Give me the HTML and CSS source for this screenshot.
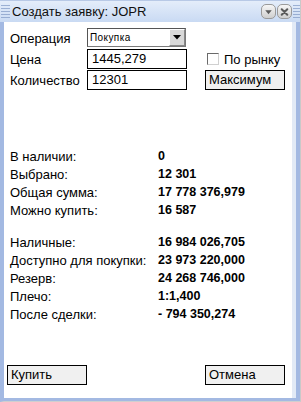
FILE: index.html
```html
<!DOCTYPE html>
<html lang="ru">
<head>
    <meta charset="UTF-8">
    <meta name="viewport" content="width=device-width, initial-scale=1.0">
    <title>Создать заявку</title>
    <link rel="stylesheet" href="styles.css">
</head>
<body>
    <div class="window">
        <div class="titlebar">
            <span class="grip left-grip"></span>
            <span class="title">Создать заявку: JOPR</span>
            <span class="tb-btn">
                <svg width="14" height="14" viewBox="0 0 14 14"><path d="M3.5 5 L10.5 5 L7 9.5 Z" fill="#5a5a5a"/></svg>
            </span>
            <span class="tb-btn">
                <svg width="14" height="14" viewBox="0 0 14 14"><path d="M4 4 L10 10 M10 4 L4 10" stroke="#5a5a5a" stroke-width="2.2" stroke-linecap="round"/></svg>
            </span>
            <span class="grip right-grip"></span>
        </div>
        <div class="content">
            <div class="form">
                <label>Операция</label>
                <div class="select">
                    <span class="select-text">Покупка</span>
                    <span class="select-arrow">
                        <svg width="8" height="5" viewBox="0 0 8 5"><path d="M0 0 H8 L4 4.5 Z" fill="#000"/></svg>
                    </span>
                </div>
                <span></span>

                <label>Цена</label>
                <div class="field">1445,279</div>
                <div class="check"><span class="box"></span>По рынку</div>

                <label>Количество</label>
                <div class="field">12301</div>
                <div class="btn">Максимум</div>
            </div>

            <div class="info first">
                <span>В наличии:</span><b>0</b>
                <span>Выбрано:</span><b>12 301</b>
                <span>Общая сумма:</span><b>17 778 376,979</b>
                <span>Можно купить:</span><b>16 587</b>
            </div>

            <div class="info second">
                <span>Наличные:</span><b>16 984 026,705</b>
                <span>Доступно для покупки:</span><b>23 973 220,000</b>
                <span>Резерв:</span><b>24 268 746,000</b>
                <span>Плечо:</span><b>1:1,400</b>
                <span>После сделки:</span><b>- 794 350,274</b>
            </div>

            <div class="actions">
                <div class="btn">Купить</div>
                <div class="btn">Отмена</div>
            </div>
        </div>
    </div>
</body>
</html>
```

FILE: styles.css
```css
*{
    box-sizing: border-box;
}
body{
    margin: 0;
    font-family: "Liberation Sans", Arial, sans-serif;
    font-size: 12px;
    color: #000;
    background: #d8d8d8;
}
.window{
    width: 301px;
    height: 402px;
    display: flex;
    flex-direction: column;
    background: #a3b9e2;
    border-left: 4px solid #a3b9e2;
    border-right: 1px solid #c9c9c9;
    border-bottom: 1px solid #cfcfcf;
    padding-right: 4px;
    padding-bottom: 3px;
}
.titlebar{
    height: 22px;
    margin-left: -4px;
    margin-right: -4px;
    display: flex;
    align-items: center;
    background: linear-gradient(#e4edfa, #c9daf3);
    border-top: 1px solid #b8c9e6;
}
.grip{
    height: 14px;
    background: repeating-linear-gradient(#7f98c4 0 1px, transparent 1px 3px);
    opacity: 0.7;
}
.left-grip{
    width: 9px;
    margin-left: 1px;
}
.right-grip{
    width: 7px;
    margin-left: 1px;
}
.title{
    flex: 1;
    padding-left: 2px;
    font-size: 13px;
    color: #111;
}
.tb-btn{
    width: 15px;
    height: 15px;
    margin-left: 1px;
    border-radius: 5px;
    border: 1px solid #9a9a9a;
    background: linear-gradient(#f6f6f6, #cfcfcf);
    display: flex;
    align-items: center;
    justify-content: center;
}
.content{
    flex: 1;
    background: #fff;
    border-right: 4px solid #e2eaf6;
    display: flex;
    flex-direction: column;
    padding: 6px 0 13px 6px;
}
.form{
    display: grid;
    grid-template-columns: 77px 100px 80px;
    grid-auto-rows: 20px;
    row-gap: 1px;
    align-items: center;
}
.form label{
    font-size: 13px;
}
.select{
    height: 19px;
    width: 99px;
    display: flex;
    border: 1px solid #7a7a7a;
    border-top-color: #555;
    border-left-color: #555;
    align-self: start;
}
.select-text{
    flex: 1;
    font-size: 10px;
    letter-spacing: 0.4px;
    line-height: 17px;
    padding-left: 2px;
}
.select-arrow{
    width: 16px;
    background: #d8d8d8;
    border-left: 1px solid #fff;
    border-top: 1px solid #fff;
    border-right: 1px solid #888;
    border-bottom: 1px solid #888;
    display: flex;
    align-items: center;
    justify-content: center;
}
.field{
    height: 20px;
    width: 100px;
    border: 1px solid #000;
    font-size: 13px;
    line-height: 18px;
    padding-left: 4px;
}
.check{
    margin-left: 20px;
    font-size: 13px;
    display: flex;
    align-items: center;
    white-space: nowrap;
}
.box{
    flex-shrink: 0;
    width: 12px;
    height: 12px;
    margin-right: 5px;
    border: 1px solid #6a6a6a;
    border-right-color: #d0d0d0;
    border-bottom-color: #d0d0d0;
}
.btn{
    width: 80px;
    height: 20px;
    border: 1px solid #000;
    background: #f0f0f0;
    font-size: 13px;
    line-height: 18px;
    padding-left: 3px;
}
.form .btn{
    margin-left: 18px;
}
.info{
    display: grid;
    grid-template-columns: 148px auto;
    grid-auto-rows: 18px;
    align-items: center;
    font-size: 13px;
}
.info b{
    font-size: 12.5px;
    font-weight: bold;
}
.first{
    margin-top: 57px;
}
.second{
    margin-top: 14px;
}
.actions{
    margin-top: auto;
    margin-left: -3px;
    display: flex;
    justify-content: space-between;
    padding-right: 7px;
}
```
